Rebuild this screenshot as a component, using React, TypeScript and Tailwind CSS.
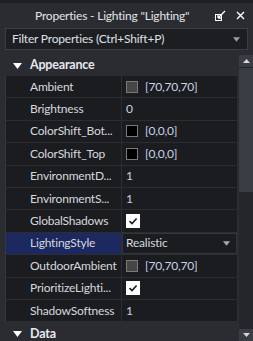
import { useState } from 'react'

type Prop = {
  name: string
  kind: 'color' | 'text' | 'check' | 'enum'
  value?: string
  swatch?: string
}

const appearance: Prop[] = [
  { name: 'Ambient', kind: 'color', value: '[70,70,70]', swatch: '#464646' },
  { name: 'Brightness', kind: 'text', value: '0' },
  { name: 'ColorShift_Bot...', kind: 'color', value: '[0,0,0]', swatch: '#000000' },
  { name: 'ColorShift_Top', kind: 'color', value: '[0,0,0]', swatch: '#000000' },
  { name: 'EnvironmentD...', kind: 'text', value: '1' },
  { name: 'EnvironmentS...', kind: 'text', value: '1' },
  { name: 'GlobalShadows', kind: 'check' },
  { name: 'LightingStyle', kind: 'enum', value: 'Realistic' },
  { name: 'OutdoorAmbient', kind: 'color', value: '[70,70,70]', swatch: '#464646' },
  { name: 'PrioritizeLighti...', kind: 'check' },
  { name: 'ShadowSoftness', kind: 'text', value: '1' },
]

function Caret({ className = '' }: { className?: string }) {
  return (
    <svg width="9" height="6" viewBox="0 0 9 6" className={className}>
      <path d="M0 0h9L4.5 6z" fill="currentColor" />
    </svg>
  )
}

function Check() {
  return (
    <div className="w-[14px] h-[14px] bg-white flex items-center justify-center">
      <svg width="10" height="8" viewBox="0 0 10 8">
        <path d="M1.5 4.2l2.5 2.3L8.6 1.5" stroke="#1b1c20" strokeWidth="1.6" fill="none" />
      </svg>
    </div>
  )
}

function Row({ p, selected }: { p: Prop; selected: boolean }) {
  return (
    <div className="flex h-[22.4px] border-b border-[#2c2d33]">
      <div
        className={
          'w-[116px] shrink-0 pl-[24px] flex items-center border-r border-[#2c2d33] whitespace-nowrap overflow-hidden ' +
          (selected ? 'bg-[#1c2860]' : '')
        }
      >
        {p.name}
      </div>
      <div className="flex-1 flex items-center pl-[4px] min-w-0 whitespace-nowrap">
        {p.kind === 'text' && <span className="text-[#c9d3e6]">{p.value}</span>}
        {p.kind === 'color' && (
          <>
            <span
              className="w-[12px] h-[12px] border border-[#7a7a7a] mr-[7px] shrink-0"
              style={{ background: p.swatch }}
            />
            <span className="text-[#c9d3e6]">{p.value}</span>
          </>
        )}
        {p.kind === 'check' && <Check />}
        {p.kind === 'enum' && (
          <div className="flex-1 h-full flex items-center justify-between pr-[6px] border border-[#34353b] -ml-[4px] pl-[3px]">
            <span>{p.value}</span>
            <Caret className="text-[#a8a9ad] w-[7px] h-[5px]" />
          </div>
        )}
      </div>
    </div>
  )
}

export default function App() {
  const [selected] = useState('LightingStyle')
  return (
    <div
      className="w-[253px] h-[341px] overflow-hidden bg-[#2b2c31] text-[#d6d8de] text-[12px] tracking-[-0.2px] flex flex-col border-t-[3px] border-[#1f2024]"
      style={{ fontFamily: 'Lato, "Open Sans", sans-serif' }}
    >
      <div className="h-[25px] shrink-0 flex items-center pl-[35px] pr-[8px]">
        <span className="flex-1 whitespace-nowrap text-[#e2e4ea] text-[12px]">Properties - Lighting "Lighting"</span>
        <svg width="11" height="11" viewBox="0 0 11 11" className="mr-[10px]">
          <rect x="0.5" y="4.5" width="6" height="6" fill="none" stroke="#fff" />
          <path d="M3 8L10 1M3 8V5M3 8h3" stroke="#fff" strokeWidth="1.3" fill="none" />
        </svg>
        <svg width="9" height="9" viewBox="0 0 9 9">
          <path d="M1 1l7 7M8 1L1 8" stroke="#fff" strokeWidth="1.4" />
        </svg>
      </div>
      <div className="mx-[5px] h-[22px] shrink-0 bg-[#1d1e22] border border-[#3d3e44] flex items-center pl-[6px] pr-[7px] justify-between">
        <span className="text-[#dfe1e6] whitespace-nowrap">Filter Properties (Ctrl+Shift+P)</span>
        <Caret className="text-[#9c9da2] w-[7px] h-[5px]" />
      </div>
      <div className="flex flex-1 mt-[5px] min-h-0">
        <div className="flex-1 flex flex-col min-w-0">
          <div className="h-[21px] shrink-0 flex items-center pl-[13px] font-bold text-[#e7e9ee] text-[12.5px]">
            <Caret className="text-white mr-[8px]" />
            Appearance
          </div>
          <div className="ml-[5px] bg-[#1b1c20] border-l border-[#35363c]">
            {appearance.map((p) => (
              <Row key={p.name} p={p} selected={p.name === selected} />
            ))}
          </div>
          <div className="h-[20px] shrink-0 flex items-center pl-[13px] font-bold text-[#e7e9ee] mt-[2px] text-[12.5px]">
            <Caret className="text-white mr-[8px]" />
            Data
          </div>
        </div>
        <div className="w-[14px] shrink-0 ml-[2px] flex flex-col bg-[#25262b]">
          <div className="h-[12px] flex items-center justify-center bg-[#3a3c44]">
            <svg width="7" height="4" viewBox="0 0 7 4">
              <path d="M0 4h7L3.5 0z" fill="#d6d8de" />
            </svg>
          </div>
          <div className="h-[124px] bg-[#3a3c44] mt-[1px]" />
          <div className="flex-1" />
          <div className="h-[12px] flex items-center justify-center bg-[#3a3c44]">
            <svg width="7" height="4" viewBox="0 0 7 4">
              <path d="M0 0h7L3.5 4z" fill="#d6d8de" />
            </svg>
          </div>
        </div>
      </div>
    </div>
  )
}
